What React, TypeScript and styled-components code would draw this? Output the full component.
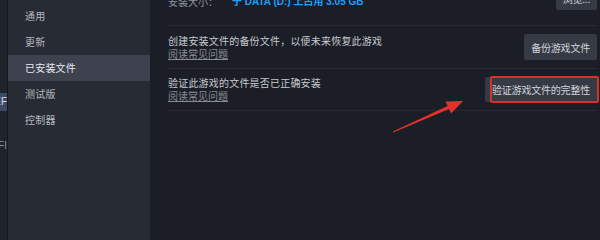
import React from 'react';
import styled, { createGlobalStyle } from 'styled-components';

const GlobalStyle = createGlobalStyle`
  html, body {
    margin: 0;
    padding: 0;
    height: 100%;
    overflow: hidden;
    background: #1b1e26;
  }
  body {
    font-family: "Noto Sans CJK SC", "Noto Sans", sans-serif;
  }
`;

const Window = styled.div`
  position: relative;
  display: flex;
  width: 600px;
  height: 100vh;
  min-height: 230px;
  overflow: hidden;
  font-size: 10px;
`;

const Rail = styled.div`
  width: 7px;
  flex-shrink: 0;
  background: #1f232b;
  border-right: 1px solid #14171d;
  display: flex;
  flex-direction: column;
  overflow: hidden;
`;

const RailTag = styled.div<{ $active?: boolean; $top: number }>`
  margin-top: ${(p) => p.$top}px;
  height: ${(p) => (p.$active ? 18 : 12)}px;
  line-height: ${(p) => (p.$active ? 18 : 12)}px;
  background: ${(p) => (p.$active ? '#3c4a63' : 'transparent')};
  color: ${(p) => (p.$active ? '#d6dbe6' : '#8c929c')};
  font-family: "Liberation Sans", sans-serif;
  font-size: 10px;
  white-space: nowrap;
  direction: rtl;
`;

const Sidebar = styled.nav`
  width: 142px;
  flex-shrink: 0;
  background: #272b33;
  padding-top: 3px;
  display: flex;
  flex-direction: column;
`;

const NavItem = styled.div<{ $selected?: boolean }>`
  height: 26px;
  line-height: 26px;
  padding-left: 17px;
  color: ${(p) => (p.$selected ? '#e8eaee' : '#b4b8bf')};
  background: ${(p) => (p.$selected ? '#3d424e' : 'transparent')};
  letter-spacing: 0.2px;
`;

const Main = styled.main`
  flex: 1;
  background: #1b1e26;
  padding: 0 3px 0 18px;
  display: flex;
  flex-direction: column;
`;

const Row = styled.div<{ $top?: boolean }>`
  display: flex;
  align-items: ${(p) => (p.$top ? 'flex-start' : 'center')};
  justify-content: space-between;
  padding: ${(p) => (p.$top ? '0 0 15px' : '8px 0')};
  margin-top: ${(p) => (p.$top ? '-14px' : '0')};
  border-bottom: 1px solid #262a33;
`;

const Info = styled.div`
  display: flex;
  flex-direction: column;
  gap: 1px;
`;

const Line = styled.div`
  line-height: 12px;
  color: #c6c9cf;
  letter-spacing: 0.2px;
`;

const SizeLine = styled.div`
  padding-top: 10px;
  line-height: 12px;
  color: #8d929a;
  display: flex;
  gap: 14px;
`;

const SizeValue = styled.span`
  color: #1a9fff;
  font-weight: 700;
  font-family: "Liberation Sans", "Noto Sans CJK SC", sans-serif;
`;

const HelpLink = styled.a`
  line-height: 12px;
  color: #898d95;
  text-decoration: underline;
  text-underline-offset: 1px;
  align-self: flex-start;
`;

const Button = styled.button<{ $h?: number }>`
  height: ${(p) => p.$h ?? 26}px;
  padding: 0 7px;
  border: none;
  border-radius: 2px;
  background: #353a45;
  color: #d2d5da;
  font-family: inherit;
  font-size: 10px;
  letter-spacing: -0.2px;
  white-space: nowrap;
`;

const ButtonWrap = styled.div`
  position: relative;
`;

const Highlight = styled.div`
  position: absolute;
  left: 5px;
  right: -2px;
  top: -1px;
  bottom: -1px;
  border: 2px solid #d9302a;
  border-radius: 2px;
  pointer-events: none;
`;

const Overlay = styled.svg`
  position: absolute;
  left: 0;
  top: 0;
  pointer-events: none;
`;

export default function App() {
  return (
    <>
      <GlobalStyle />
      <Window>
        <Rail>
          <RailTag $top={93} $active>
            EF
          </RailTag>
          <RailTag $top={29}>FI</RailTag>
        </Rail>
        <Sidebar>
          <NavItem>通用</NavItem>
          <NavItem>更新</NavItem>
          <NavItem $selected>已安装文件</NavItem>
          <NavItem>测试版</NavItem>
          <NavItem>控制器</NavItem>
        </Sidebar>
        <Main>
          <Row $top>
            <SizeLine>
              安装大小：<SizeValue>于 DATA (D:) 上占用 3.05 GB</SizeValue>
            </SizeLine>
            <Button $h={24}>浏览...</Button>
          </Row>
          <Row>
            <Info>
              <Line>创建安装文件的备份文件，以便未来恢复此游戏</Line>
              <HelpLink>阅读常见问题</HelpLink>
            </Info>
            <Button>备份游戏文件</Button>
          </Row>
          <Row>
            <Info>
              <Line>验证此游戏的文件是否已正确安装</Line>
              <HelpLink>阅读常见问题</HelpLink>
            </Info>
            <ButtonWrap>
              <Button $h={25}>验证游戏文件的完整性</Button>
              <Highlight />
            </ButtonWrap>
          </Row>
        </Main>
        <Overlay width="600" height="230" viewBox="0 0 600 230">
          <polygon
            points="393.2,132.6 449.1,109.1 451.2,113.4 463,101 445.6,101.6 447.7,105.9 392.8,131.4"
            fill="#e4322b"
          />
        </Overlay>
      </Window>
    </>
  );
}
